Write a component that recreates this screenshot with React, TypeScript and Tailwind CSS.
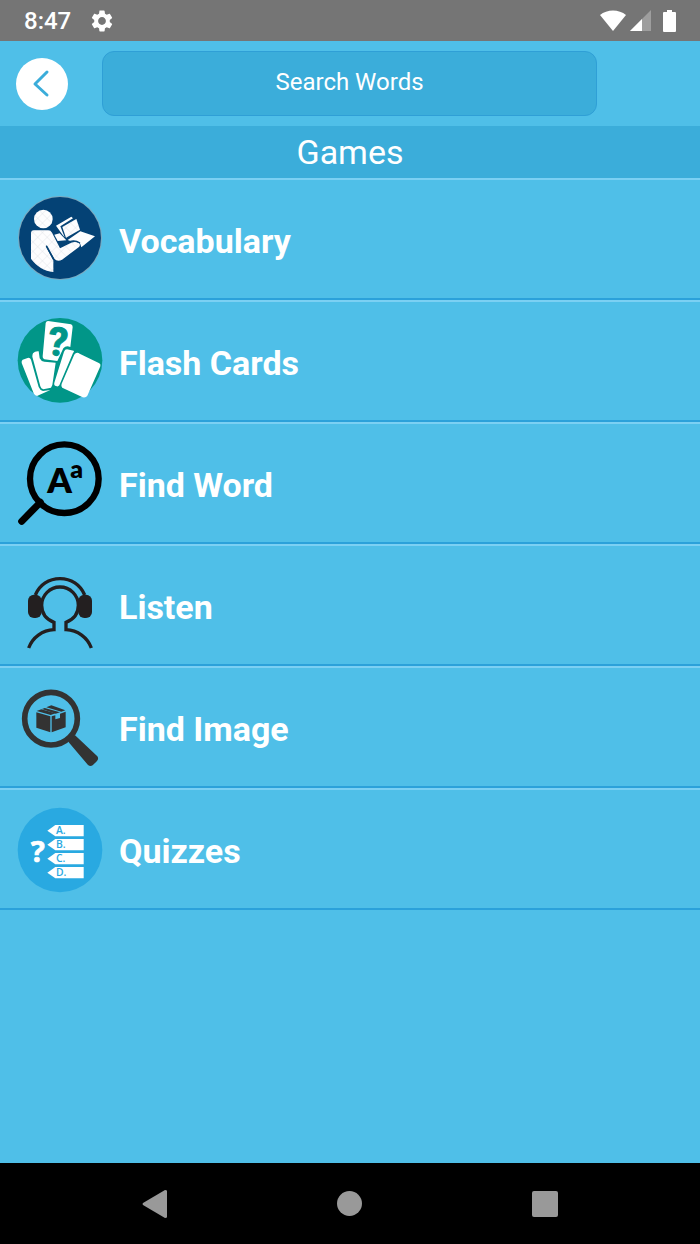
import { MdSettings } from 'react-icons/md';

function VocabularyIcon() {
    return (
        <svg viewBox="48 45 264 264" className="size-[88px] shrink-0" aria-hidden="true">
            <defs>
                <pattern id="mesh" width="20" height="20" patternUnits="userSpaceOnUse" patternTransform="rotate(45)">
                    <path d="M0 0H20M0 0V20" stroke="#d9dde3" strokeWidth="2" fill="none" />
                </pattern>
            </defs>
            <circle cx="180" cy="174" r="126" fill="#7ea9bd" />
            <circle cx="180" cy="174" r="123" fill="#044275" />
            <g fill="#fdfdfe">
                <circle cx="130" cy="117" r="28" />
                <path d="M93 158Q94 151 101 151H145Q152 151 156 158L180 205L214 188Q226 184 237 189Q243 195 236 202L186 239Q172 247 163 236L140 198L138 200L160 241V276C133 273 110 259 93 236Z" />
                <path d="M168 137L214 110L219 115L181 139L194 172L188 165Z" />
                <path d="M187 141L229 117L240 149L198 173Z" />
                <path d="M163 164L179 160L199 181L173 183Z" />
                <path d="M203 180L241 154L285 169L244 202L240 190Q226 181 213 184Z" />
            </g>
            <g fill="url(#mesh)">
                <circle cx="130" cy="117" r="28" />
                <path d="M93 158Q94 151 101 151H145Q152 151 156 158L180 205L214 188L237 189L186 239Q172 247 163 236L140 198L160 241V276C133 273 110 259 93 236Z" />
                <path d="M187 141L229 117L240 149L198 173Z" />
            </g>
            <path d="M140 199L161 238" stroke="#044275" strokeWidth="5" strokeLinecap="round" />
            <path d="M240 189Q226 180 211 184" fill="none" stroke="#044275" strokeWidth="4" />
        </svg>
    );
}

function FlashCardsIcon() {
    return (
        <svg viewBox="48 66 264 264" className="size-[88px] shrink-0 overflow-visible" aria-hidden="true">
            <circle cx="180" cy="196" r="127" fill="#019688" />
            <g fill="#fff">
                <path d="M68 194L85 188Q91 188 93 194L116 276Q120 286 129 288L151 285L111 303Q104 302 101 295L65 204Q64 197 68 194Z" />
                <path d="M99 175Q105 168 116 169L119 190Q123 199 133 200L167 203L157 270L153 278L130 283Q123 281 121 274L97 185Q97 179 99 175Z" />
                <path d="M144 78L213 88Q218 90 218 96L211 156Q198 150 190 160L172 198L133 193Q127 190 128 184L137 84Q139 78 144 78Z" />
                <path d="M201 163L221 167Q224 170 219 174L178 271Q174 276 168 273Q161 271 163 263L192 170Q195 163 201 163Z" />
                <path d="M229 174Q234 172 239 176L298 205Q303 208 301 214L262 302Q258 309 248 307L190 280Q182 276 185 266L222 181Q224 175 229 174Z" />
            </g>
            <text
                x="174"
                y="182"
                transform="rotate(7 174 140)"
                textAnchor="middle"
                fill="#019688"
                stroke="#019688"
                strokeWidth="3"
                className="font-['Roboto'] text-[118px] font-bold"
            >
                ?
            </text>
        </svg>
    );
}

function FindWordIcon() {
    return (
        <svg viewBox="48 57 264 264" className="size-[88px] shrink-0" aria-hidden="true">
            <circle cx="193" cy="176" r="103" fill="none" stroke="#000" strokeWidth="19" />
            <path d="M121 247L65 304" stroke="#000" strokeWidth="21" strokeLinecap="round" />
            <text x="179" y="218" textAnchor="middle" className="font-['Lato'] text-[104px] font-extrabold">
                A
            </text>
            <text x="230" y="173" textAnchor="middle" className="font-['Lato'] text-[74px] font-extrabold">
                a
            </text>
        </svg>
    );
}

function ListenIcon() {
    return (
        <svg viewBox="48 3 264 264" className="size-[88px] shrink-0" aria-hidden="true">
            <g fill="none" stroke="#231f20" strokeWidth="10">
                <path d="M106 105C119 74 147 56 180 56S241 74 254 105" />
                <path d="M86 264C97 233 127 210 162 209V187C138 178 125 160 125 136A55 55 0 0 1 235 136C235 160 222 178 198 187V209C233 210 263 233 274 264" />
            </g>
            <rect x="84" y="104" width="41" height="70" rx="18" fill="#231f20" />
            <rect x="235" y="104" width="41" height="70" rx="18" fill="#231f20" />
        </svg>
    );
}

function FindImageIcon() {
    return (
        <svg viewBox="48 69 264 264" className="size-[88px] shrink-0" aria-hidden="true">
            <circle cx="153" cy="176" r="79" fill="none" stroke="#333" strokeWidth="17" />
            <path d="M204 243L222 226Q226 226 230 230L292 289Q297 296 291 303L278 316Q271 320 264 315L208 249Z" fill="#333" />
            <g fill="#333">
                <path d="M109 157L151 169V217L109 203Z" />
                <path d="M155 169L166 166V178L180 174V161L197 155V202L155 217Z" />
                <path d="M110 153L124 148L166 160L152 165Z" />
                <path d="M126 147L134 144L180 157L167 161Z" />
                <path d="M139 142L154 136L196 151L184 155Z" />
            </g>
        </svg>
    );
}

const answers = [
    { letter: 'A.', y: 121 },
    { letter: 'B.', y: 163 },
    { letter: 'C.', y: 205 },
    { letter: 'D.', y: 247 },
];

function QuizzesIcon() {
    return (
        <svg viewBox="48 61 264 264" className="size-[88px] shrink-0" aria-hidden="true">
            <circle cx="180" cy="196" r="127" fill="#29a9e1" />
            <text
                x="113"
                y="232"
                textAnchor="middle"
                fill="#fff"
                stroke="#fff"
                strokeWidth="2"
                className="font-['Noto_Sans'] text-[88px] font-bold"
            >
                ?
            </text>
            {answers.map(({ letter, y }) => (
                <g key={letter}>
                    <path d={`M142 ${y + 17}L166 ${y}H251V${y + 34}H166Z`} fill="#fff" />
                    <text x="168" y={y + 28} fill="#29a9e1" className="font-['Open_Sans'] text-[31px] font-semibold">
                        {letter}
                    </text>
                </g>
            ))}
        </svg>
    );
}

const games = [
    { label: 'Vocabulary', Icon: VocabularyIcon },
    { label: 'Flash Cards', Icon: FlashCardsIcon },
    { label: 'Find Word', Icon: FindWordIcon },
    { label: 'Listen', Icon: ListenIcon },
    { label: 'Find Image', Icon: FindImageIcon },
    { label: 'Quizzes', Icon: QuizzesIcon },
];

function StatusBar() {
    return (
        <div className="flex h-[41px] items-center bg-[#757575] px-6 text-white">
            <span className="text-[24px] leading-6 font-medium">8:47</span>
            <MdSettings size={26} className="ml-[18px]" />
            <svg viewBox="0 0 26 22" className="ml-auto h-[22px] w-[26px]" aria-hidden="true">
                <path d="M0 5C7-1 19-1 26 5L13 21Z" fill="#fff" />
            </svg>
            <svg viewBox="0 0 21 21" className="ml-1 size-[21px]" aria-hidden="true">
                <path d="M0 21L21 0V21Z" fill="#9e9e9e" />
                <path d="M0 21L12 9V21Z" fill="#fff" />
            </svg>
            <svg viewBox="0 0 13 22" className="ml-3 h-[22px] w-[13px]" aria-hidden="true">
                <path d="M4 0H9V2H12Q13 2 13 3V21Q13 22 12 22H1Q0 22 0 21V3Q0 2 1 2H4Z" fill="#fff" />
            </svg>
        </div>
    );
}

export default function App() {
    return (
        <div className="flex min-h-screen flex-col bg-[#4fbfe8] font-['Roboto',sans-serif] text-white">
            <StatusBar />
            <header className="flex h-[85px] items-center gap-[34px] pr-[103px] pl-4">
                <button
                    type="button"
                    aria-label="Back"
                    className="flex size-[52px] shrink-0 items-center justify-center rounded-full bg-white"
                >
                    <svg viewBox="0 0 52 52" className="size-[52px]" aria-hidden="true">
                        <path d="M31 14L19 26L31 37" fill="none" stroke="#3badda" strokeWidth="3" strokeLinecap="round" strokeLinejoin="round" />
                    </svg>
                </button>
                <input
                    type="text"
                    aria-label="Search Words"
                    placeholder="Search Words"
                    className="h-[65px] min-w-0 flex-1 rounded-xl border border-[#2f9fd6] bg-[#3badda] pb-1 text-center text-[24px] outline-none placeholder:text-white"
                />
            </header>
            <h1 className="bg-[#3badda] text-center text-[34px] leading-[52px]">Games</h1>
            <main className="flex-1">
                <ul>
                    {games.map(({ label, Icon }) => (
                        <li key={label}>
                            <button
                                type="button"
                                className="flex h-[122px] w-full items-center gap-[15px] border-t-2 border-b-2 border-t-[#7bd0f3] border-b-[#2ba1da] pl-4 text-left text-[34px] font-bold"
                            >
                                <Icon />
                                <span className="pt-1">{label}</span>
                            </button>
                        </li>
                    ))}
                </ul>
            </main>
            <nav className="grid h-[81px] grid-cols-3 bg-black px-[58px]">
                <button type="button" aria-label="Back" className="flex items-center justify-center">
                    <svg viewBox="0 0 26 28" className="h-[28px] w-[26px]" aria-hidden="true">
                        <path d="M1 13L23 0Q25 0 25 1V27Q25 28 23 28L1 15Q0 14 1 13Z" fill="#999" />
                    </svg>
                </button>
                <button type="button" aria-label="Home" className="flex items-center justify-center">
                    <span className="size-[25px] rounded-full bg-[#999]" />
                </button>
                <button type="button" aria-label="Recent apps" className="flex items-center justify-center">
                    <span className="size-[26px] rounded-[2px] bg-[#999]" />
                </button>
            </nav>
        </div>
    );
}
